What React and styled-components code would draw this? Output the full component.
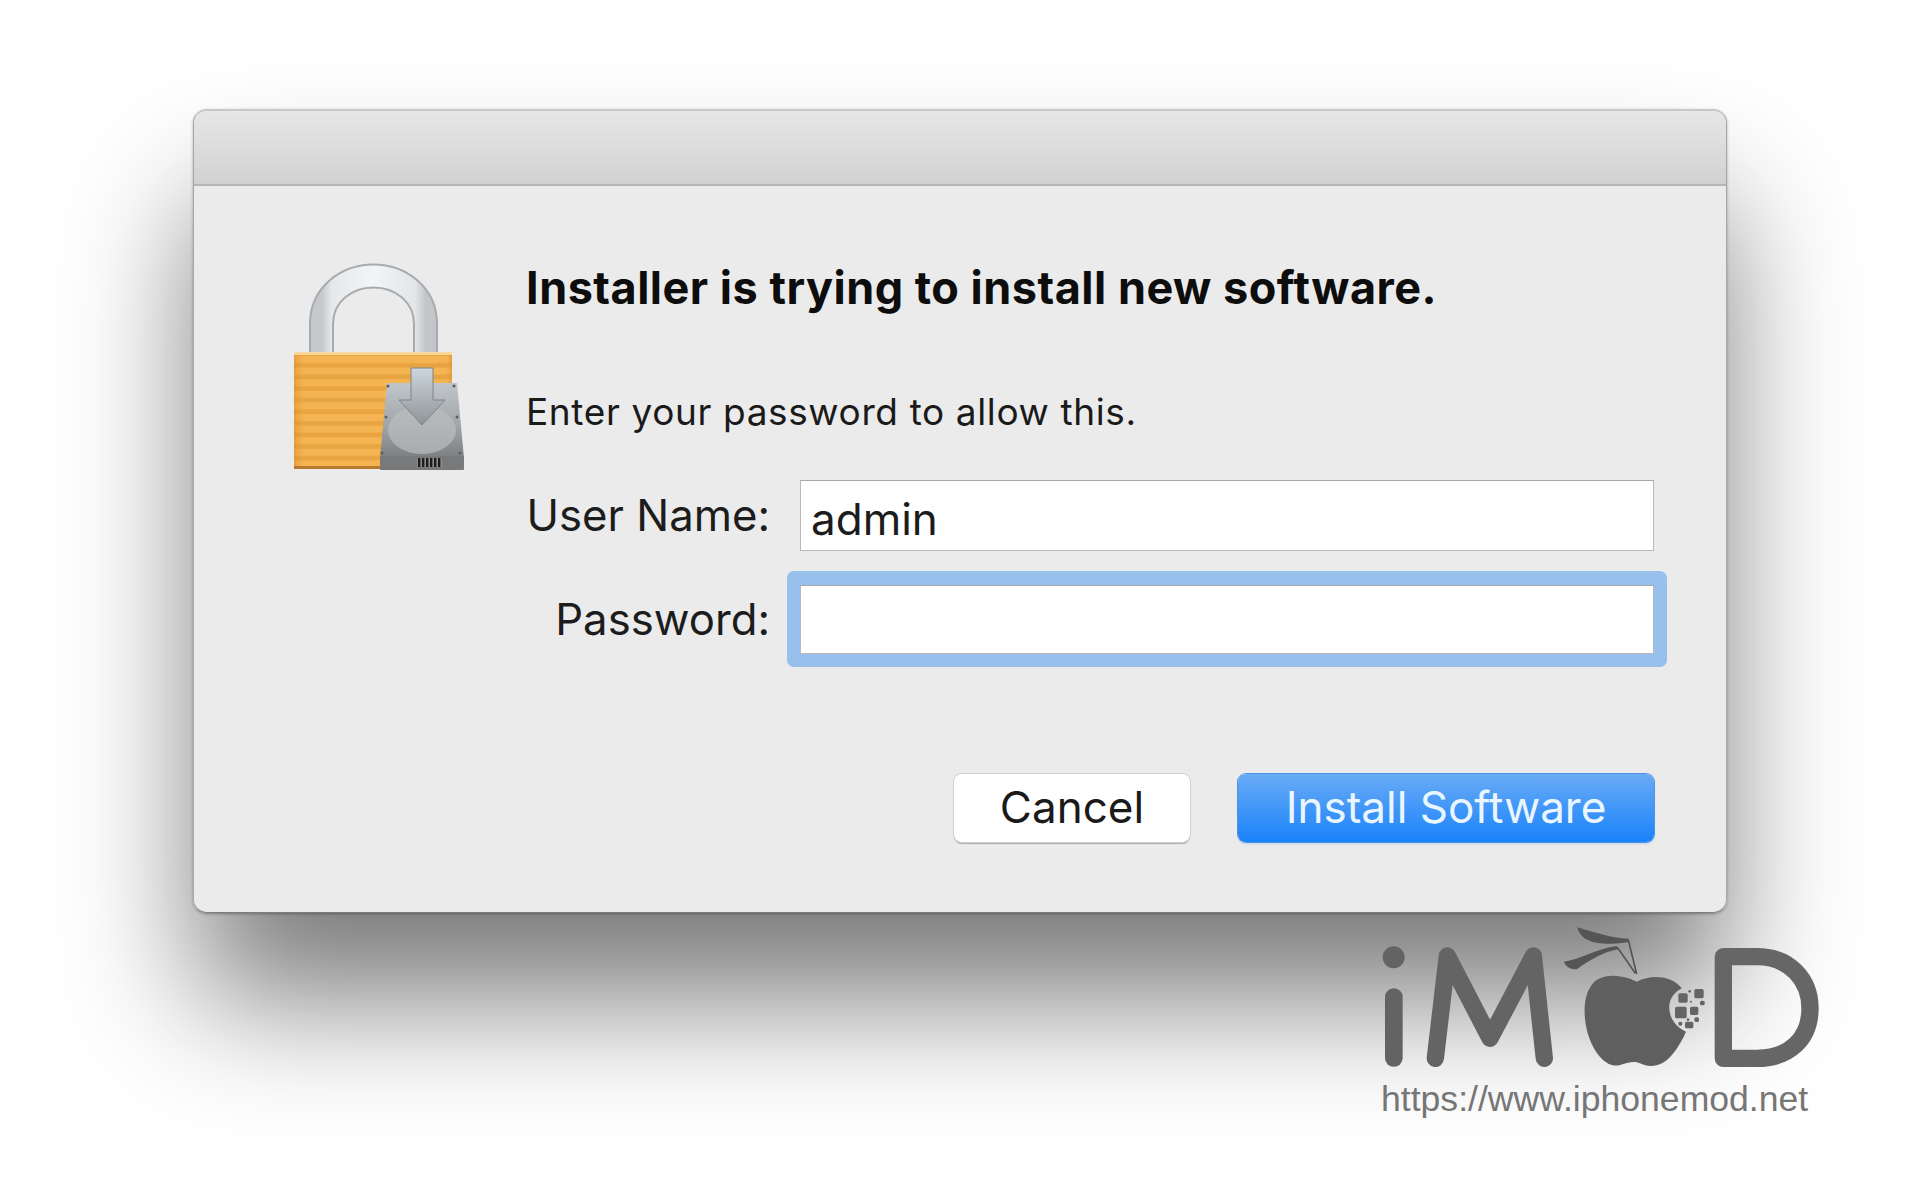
import React from 'react'
import styled, { createGlobalStyle } from 'styled-components'

const GlobalStyle = createGlobalStyle`
  html, body { margin: 0; padding: 0; background: #fff; }
  #root { width: 1920px; height: 1190px; }
`

const Page = styled.div`
  position: relative;
  box-sizing: border-box;
  width: 1920px;
  height: 1190px;
  padding: 109px 193px 0;
  overflow: hidden;
  background: #fff;
  font-family: Inter, "Noto Sans", "Liberation Sans", sans-serif;
`

const DialogShadow = styled.div`
  width: 1534px;
  height: 804px;
  border-radius: 14px;
  box-shadow:
    0 90px 130px -4px rgba(0, 0, 0, 0.52),
    0 1px 3px rgba(0, 0, 0, 0.3);
`

const Dialog = styled.div`
  display: flex;
  flex-direction: column;
  box-sizing: border-box;
  width: 1534px;
  height: 804px;
  border-radius: 14px;
  overflow: hidden;
  background: #ebebeb;
  border: 1px solid #a8a8a8;
  border-top: 2px solid #c8c8c8;
  border-bottom: 1px solid #7c7c7c;
`

const TitleBar = styled.div`
  flex: 0 0 75px;
  box-sizing: border-box;
  background: linear-gradient(#e7e7e7, #d1d1d1);
  border-bottom: 2px solid #b6b6b6;
`

const Body = styled.div`
  flex: 1;
  display: flex;
  padding: 54px 72px 0 76px;
  gap: 36px;
`

const IconSlot = styled.div`
  flex: 0 0 220px;
  height: 250px;
`

const Content = styled.div`
  flex: 1;
  display: flex;
  flex-direction: column;
`

const Heading = styled.div`
  margin-top: 22px;
  font-size: 45px;
  line-height: 52px;
  font-weight: 700;
  letter-spacing: 0.5px;
  color: #0d0d0d;
  white-space: nowrap;
`

const Subtext = styled.div`
  margin-top: 74px;
  font-size: 37px;
  line-height: 48px;
  letter-spacing: 0.62px;
  color: #1a1a1a;
  white-space: nowrap;
`

const Form = styled.div`
  margin-top: 44px;
  display: grid;
  grid-template-columns: 244px 1fr;
  column-gap: 30px;
  row-gap: 34px;
  align-items: center;
`

const Label = styled.div`
  text-align: right;
  font-size: 43.7px;
  line-height: 50px;
  color: #1c1c1c;
  white-space: nowrap;
`

const Field = styled.div`
  box-sizing: border-box;
  height: ${(p) => (p.$focused ? 69 : 71)}px;
  padding: 8px 10px 0;
  background: #fff;
  border: 1px solid #b9b9b9;
  border-top-color: #a8a8a8;
  font-size: 44px;
  line-height: 60px;
  color: #1c1c1c;
`

const FocusRing = styled.div`
  margin: -14px -13px -13px;
  padding: 14px 13px 13px;
  border-radius: 7px;
  background: #98c0ec;
`

const Actions = styled.div`
  margin-top: 120px;
  display: flex;
  justify-content: flex-end;
  gap: 48px;
`

const Button = styled.div`
  box-sizing: border-box;
  width: ${(p) => (p.$primary ? 416 : 236)}px;
  height: 68px;
  display: flex;
  align-items: center;
  justify-content: center;
  padding-bottom: 2px;
  border-radius: 8px;
  font-size: 44px;
  color: ${(p) => (p.$primary ? '#eaf6ff' : '#1a1a1a')};
  background: ${(p) => (p.$primary ? 'linear-gradient(#69abf5, #1a82fb)' : '#fff')};
  box-shadow: ${(p) =>
    p.$primary
      ? '0 0 0 1px #4f94e4, 0 2px 2px rgba(60, 130, 230, 0.25)'
      : '0 0 0 1px #cfcfcf, 0 2px 1px rgba(0, 0, 0, 0.28)'};
`

const Watermark = styled.div`
  position: absolute;
  left: 1360px;
  top: 910px;
  width: 470px;
  height: 220px;
`

const WatermarkUrl = styled.div`
  position: absolute;
  left: 21px;
  top: 169px;
  font-family: "Liberation Sans", Arial, sans-serif;
  font-size: 35.6px;
  line-height: 40px;
  color: #767676;
  white-space: nowrap;
`

const LockIcon = () => (
  <svg width="220" height="250" viewBox="0 0 220 250">
    <defs>
      <linearGradient id="shackle" x1="0" y1="0" x2="1" y2="0">
        <stop offset="0" stopColor="#c6c9cc" />
        <stop offset="0.1" stopColor="#e6e8ea" />
        <stop offset="0.5" stopColor="#f3f4f5" />
        <stop offset="0.9" stopColor="#e3e5e7" />
        <stop offset="1" stopColor="#c3c6c9" />
      </linearGradient>
      <pattern id="stripes" width="8" height="11.6" patternUnits="userSpaceOnUse">
        <rect width="8" height="11.6" fill="#f5b452" />
        <rect y="7" width="8" height="4.6" fill="#e9a442" />
      </pattern>
      <linearGradient id="bodyShade" x1="0" y1="0" x2="1" y2="0">
        <stop offset="0" stopColor="#d98a2b" stopOpacity="0.55" />
        <stop offset="0.08" stopColor="#f2ac4a" stopOpacity="0" />
        <stop offset="0.95" stopColor="#f2ac4a" stopOpacity="0" />
        <stop offset="1" stopColor="#d98a2b" stopOpacity="0.5" />
      </linearGradient>
      <linearGradient id="disk" x1="0" y1="0" x2="0" y2="1">
        <stop offset="0" stopColor="#c0c5c9" />
        <stop offset="0.55" stopColor="#a2a6a9" />
        <stop offset="1" stopColor="#7c7f82" />
      </linearGradient>
      <linearGradient id="arrow" x1="0" y1="0" x2="0" y2="1">
        <stop offset="0" stopColor="#ccd6dc" />
        <stop offset="1" stopColor="#8f9498" />
      </linearGradient>
      <pattern id="grille" width="4" height="10" patternUnits="userSpaceOnUse">
        <rect width="4" height="10" fill="#8b8d8f" />
        <rect width="2.4" height="10" fill="#1d1d1d" />
      </pattern>
    </defs>
    <path
      d="M51.5 113 V84 C51.5 54 77 36 103.5 36 C130 36 155.5 54 155.5 84 V113"
      fill="none"
      stroke="#a7abaf"
      strokeWidth="25"
    />
    <path
      d="M51.5 113 V84 C51.5 54 77 36 103.5 36 C130 36 155.5 54 155.5 84 V113"
      fill="none"
      stroke="url(#shackle)"
      strokeWidth="21"
    />
    <rect x="24" y="112" width="158" height="116" fill="url(#stripes)" />
    <rect x="24" y="112" width="158" height="116" fill="url(#bodyShade)" />
    <rect x="24" y="112" width="158" height="3" fill="#fbd79a" />
    <rect x="24" y="226" width="158" height="3" fill="#b77a2c" />
    <path d="M117 143 H187 L194 218 H110 Z" fill="url(#disk)" />
    <ellipse cx="152" cy="190" rx="34" ry="24" fill="#babec1" opacity="0.7" />
    <rect x="110" y="216" width="84" height="14" rx="1" fill="#77797b" />
    <rect x="147" y="218" width="25" height="9" fill="url(#grille)" />
    <path
      d="M141 128 H163 V160 H175 L152 185 L129 160 H141 Z"
      fill="url(#arrow)"
      stroke="#7e8386"
      strokeWidth="1"
    />
    <circle cx="118" cy="146" r="1.5" fill="#5b5e60" />
    <circle cx="184" cy="146" r="1.5" fill="#5b5e60" />
    <circle cx="116" cy="177" r="1.5" fill="#5b5e60" />
    <circle cx="187" cy="177" r="1.5" fill="#5b5e60" />
    <circle cx="112" cy="213" r="1.5" fill="#5b5e60" />
    <circle cx="190" cy="213" r="1.5" fill="#5b5e60" />
  </svg>
)

const bits = [
  [955, 250, 28, 28],
  [1003, 237, 28, 28],
  [945, 290, 35, 35],
  [990, 290, 25, 25],
  [1020, 272, 14, 14],
  [1003, 322, 14, 14],
  [975, 335, 25, 20],
  [985, 240, 8, 8],
  [990, 272, 6, 6],
  [980, 325, 8, 8],
  [955, 335, 12, 12],
]

const LogoMark = () => (
  <svg width="470" height="220" viewBox="0 0 1410 660">
    <g fill="#636363">
      <circle cx="101" cy="142" r="33" />
      <rect x="75" y="235" width="53" height="235" rx="26" />
    </g>
    <path
      d="M226 445 L262 138 L390 385 L520 138 L553 445"
      fill="none"
      stroke="#646464"
      strokeWidth="52"
      strokeLinecap="round"
      strokeLinejoin="round"
    />
    <path
      d="M1090 140 H1190 C1290 140 1350 210 1350 295 C1350 385 1290 445 1190 445 H1090 Z"
      fill="none"
      stroke="#666"
      strokeWidth="52"
      strokeLinejoin="round"
    />
    <path
      d="M830 215 C780 190 720 190 695 225 C665 265 670 340 690 390 C710 440 745 475 780 465 C800 460 820 450 840 460 C870 475 910 470 940 430 C955 410 970 385 978 365 C945 350 925 320 928 285 C930 265 945 245 965 235 C940 200 880 190 830 215 Z"
      fill="#5f5f5f"
    />
    <path d="M652 52 C690 62 750 85 806 86 L805 96 C750 105 665 110 652 52 Z" fill="#555" />
    <path
      d="M612 155 C660 150 710 115 770 108 L775 118 C730 125 690 150 650 178 C630 178 615 168 612 155 Z"
      fill="#555"
    />
    <path d="M805 90 L830 192 M772 112 L826 190" fill="none" stroke="#555" strokeWidth="5" />
    {bits.map(([x, y, w, h]) => (
      <rect key={`${x}-${y}`} x={x} y={y} width={w} height={h} rx="5" fill="#646464" />
    ))}
  </svg>
)

const App = () => {
  return (
    <Page>
      <GlobalStyle />
      <DialogShadow>
        <Dialog>
          <TitleBar />
          <Body>
            <IconSlot>
              <LockIcon />
            </IconSlot>
            <Content>
              <Heading>Installer is trying to install new software.</Heading>
              <Subtext>Enter your password to allow this.</Subtext>
              <Form>
                <Label>User Name:</Label>
                <Field>admin</Field>
                <Label>Password:</Label>
                <FocusRing>
                  <Field $focused />
                </FocusRing>
              </Form>
              <Actions>
                <Button>Cancel</Button>
                <Button $primary>Install Software</Button>
              </Actions>
            </Content>
          </Body>
        </Dialog>
      </DialogShadow>
      <Watermark>
        <LogoMark />
        <WatermarkUrl>https://www.iphonemod.net</WatermarkUrl>
      </Watermark>
    </Page>
  )
}

export default App
